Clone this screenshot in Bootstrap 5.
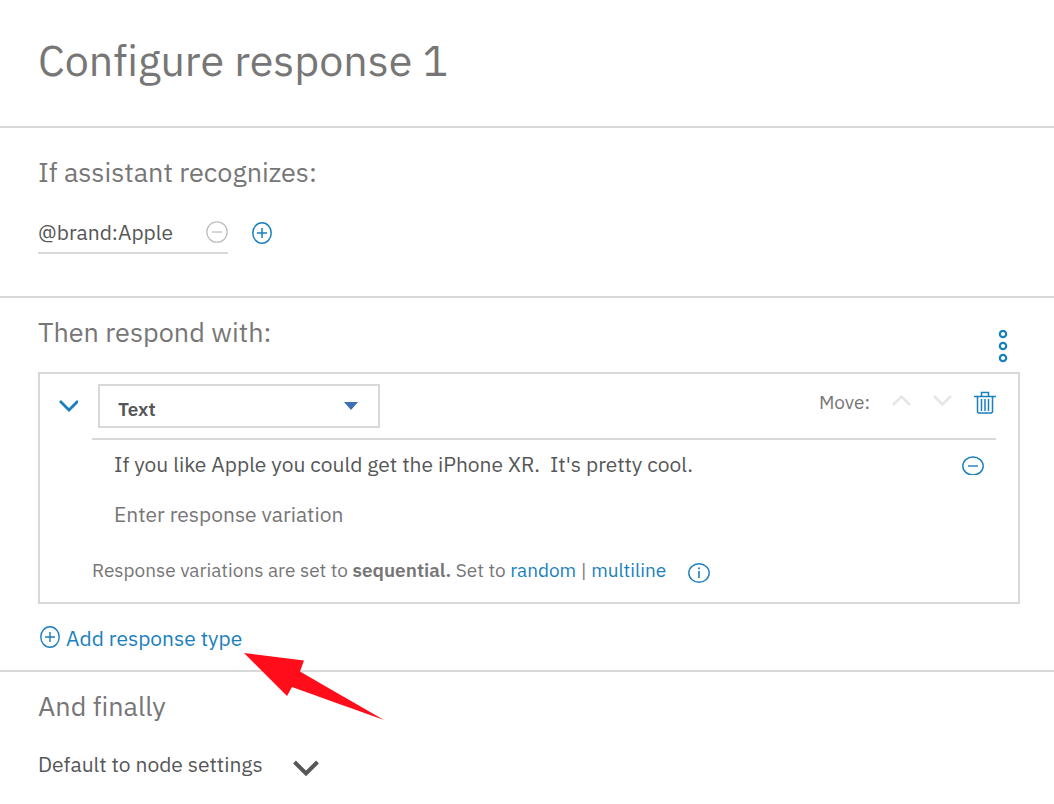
<!DOCTYPE html>
<html lang="en">
<head>
<meta charset="utf-8">
<meta name="viewport" content="width=device-width, initial-scale=1">
<title>Configure response 1</title>
<link href="https://cdn.jsdelivr.net/npm/bootstrap@5.3.0/dist/css/bootstrap.min.css" rel="stylesheet">
<style>
  :root { --line: #d8d8d8; --muted: #777677; --ink: #565758; --blue: #1a7fbd; }
  body { font-family: "IBM Plex Sans", "Open Sans", sans-serif; color: var(--ink); font-size: 21px; line-height: 28px; background: #fff; font-variant-ligatures: none; }
  svg { display: block; fill: none; stroke: currentColor; }
  h1 { font-size: 43px; line-height: 52px; color: var(--muted); font-weight: 400; }
  h2 { font-size: 27px; line-height: 32px; color: var(--muted); font-weight: 400; margin-bottom: 28px; }
  a { color: var(--blue); text-decoration: none; }
  .panel-section { padding: 18px 34px 18px 38px; border-top: 2px solid var(--line); }
  .panel-section.recognizes { padding-top: 28px; padding-bottom: 42px; }
  .recognizes h2 { margin-bottom: 30px; }
  .panel-head { padding: 34px 38px 40px; }
  .icon-btn { color: var(--blue); padding: 0; border: 0; line-height: 1; flex: none; }
  .muted-btn { color: #bfbfbf; }
  .faint-btn { color: #e6e6e6; }
  .dark-btn { color: var(--ink); }
  .condition { width: 190px; border-bottom: 2px solid var(--line); padding-bottom: 6px; }
  .plain-input { font-size: 21px; line-height: 28px; height: 28px; min-height: 0; padding: 0; border: 0; color: var(--ink); background: none; border-radius: 0; }
  .plain-input::placeholder { color: var(--muted); opacity: 1; }
  .plain-input:focus { background: none; }
  .respond-head { padding-bottom: 8px; }
  .respond-head .icon-btn { margin-top: 14px; }
  .response-box { border: 2px solid var(--line); padding: 10px 22px 18px 18px; }
  .box-head { gap: 20px; margin-bottom: 10px; }
  .move-tools { gap: 22px; padding-bottom: 8px; }
  .type-select { width: 282px; height: 44px; border: 2px solid var(--line); border-radius: 0; padding: 6px 40px 0 18px;
    font-size: 19px; font-weight: 600; color: var(--ink);
    background-image: url("data:image/svg+xml,%3Csvg xmlns='http://www.w3.org/2000/svg' viewBox='0 0 14 8'%3E%3Cpath d='M0 0h14L7 8z' fill='%233f6fb3'/%3E%3C/svg%3E");
    background-size: 14px 8px; background-position: right 20px center; }
  .note { font-size: 19px; color: var(--muted); }
  .note b { font-weight: 600; }
  .response-body { margin-left: 34px; border-top: 2px solid var(--line); }
  .variation { padding: 10px 12px 12px 22px; }
  .note-row { margin-top: 16px; gap: 22px; }
  .add-row { margin-top: 20px; }
  .final-choice { gap: 30px; }
  .pointer-arrow { position: absolute; left: 206px; top: 27px; pointer-events: none; }
</style>
</head>
<body>
<main>
  <header class="panel-head"><h1 class="m-0">Configure response 1</h1></header>

  <section class="panel-section recognizes">
    <h2>If assistant recognizes:</h2>
    <div class="d-flex align-items-start">
      <div class="condition d-flex align-items-center">
        <input class="form-control plain-input shadow-none" aria-label="Condition" value="@brand:Apple">
        <button class="btn icon-btn muted-btn" aria-label="Remove condition"><svg width="22" height="22" stroke-width="1.3"><circle cx="11" cy="11" r="10.2"/><path d="M6 11h10"/></svg></button>
      </div>
      <button class="btn icon-btn ms-4 mt-1" aria-label="Add condition"><svg width="20" height="22" stroke-width="1.5"><ellipse cx="10" cy="11" rx="9.2" ry="10.2"/><path d="M5 11h10M10 6v10"/></svg></button>
    </div>
  </section>

  <section class="panel-section">
    <div class="respond-head d-flex justify-content-between align-items-start">
      <h2 class="m-0">Then respond with:</h2>
      <button class="btn icon-btn me-2" aria-label="More options"><svg width="18" height="34" stroke-width="2.2"><circle cx="9" cy="4" r="3.2"/><circle cx="9" cy="16" r="3.2"/><circle cx="9" cy="28" r="3.2"/></svg></button>
    </div>
    <div class="response-box">
      <div class="box-head d-flex">
        <button class="btn icon-btn" aria-label="Collapse response"><svg width="20" height="14" stroke-width="2.8"><path d="M2 2 11 11l9-9"/></svg></button>
        <select class="form-select type-select shadow-none" aria-label="Response type"><option>Text</option></select>
        <div class="move-tools d-flex align-items-center ms-auto">
          <span class="note">Move:</span>
          <button class="btn icon-btn faint-btn" aria-label="Move up"><svg width="19" height="18" stroke-width="2.6"><path d="M1 12 9.500 3.500 18 12"/></svg></button>
          <button class="btn icon-btn faint-btn" aria-label="Move down"><svg width="19" height="18" stroke-width="2.6"><path d="M1 3l8.500 8.500L18 3"/></svg></button>
          <button class="btn icon-btn" aria-label="Delete response"><svg width="22" height="24" stroke-width="1.5"><path d="M0 6.500h22M7.500 6V2.500h7V6M3.500 7v15l1 1h13l1-1V7M7.500 9v12M11 9v12M14.500 9v12"/></svg></button>
        </div>
      </div>
      <div class="response-body">
        <div class="variation d-flex align-items-center">
          <input class="form-control plain-input shadow-none" aria-label="Response variation 1" value="If you like Apple you could get the iPhone XR.&nbsp; It's pretty cool.">
          <button class="btn icon-btn" aria-label="Remove variation"><svg width="22" height="22" stroke-width="1.4"><ellipse cx="11" cy="13" rx="10.2" ry="9"/><path d="M6 13h10"/></svg></button>
        </div>
        <div class="variation"><input class="form-control plain-input shadow-none" aria-label="New response variation" placeholder="Enter response variation"></div>
        <div class="note note-row d-flex align-items-center">
          <span>Response variations are set to <b>sequential.</b> Set to <a href="#">random</a> | <a href="#">multiline</a></span>
          <button class="btn icon-btn mt-1" aria-label="About variations"><svg width="22" height="22" stroke-width="1.4"><ellipse cx="11" cy="12" rx="10.2" ry="9.2"/><path d="M11 10v7" stroke-width="1.6"/><path d="M11 6.500v1.700" stroke-width="1.8"/></svg></button>
        </div>
      </div>
    </div>
    <div class="add-row position-relative d-flex">
      <a href="#" class="d-flex align-items-center gap-1"><svg width="24" height="24" stroke-width="1.4"><ellipse cx="12" cy="11" rx="9.2" ry="10.2"/><path d="M7 11h10M12 6v10"/></svg>Add response type</a>
      <svg class="pointer-arrow" width="142" height="70" aria-hidden="true"><path d="M0 2 60 9.500 56 20.500 140 69 48 36 43 45z" fill="#ff0d1b" stroke="none"/></svg>
    </div>
  </section>

  <section class="panel-section">
    <h2>And finally</h2>
    <div class="final-choice d-flex align-items-center">
      <span>Default to node settings</span>
      <button class="btn icon-btn dark-btn mt-2" aria-label="Choose final action"><svg width="26" height="18" stroke-width="4"><path d="M1.500 3 13 14.500 24.500 3"/></svg></button>
    </div>
  </section>
</main>
<script src="https://cdn.jsdelivr.net/npm/bootstrap@5.3.0/dist/js/bootstrap.bundle.min.js"></script>
</body>
</html>
